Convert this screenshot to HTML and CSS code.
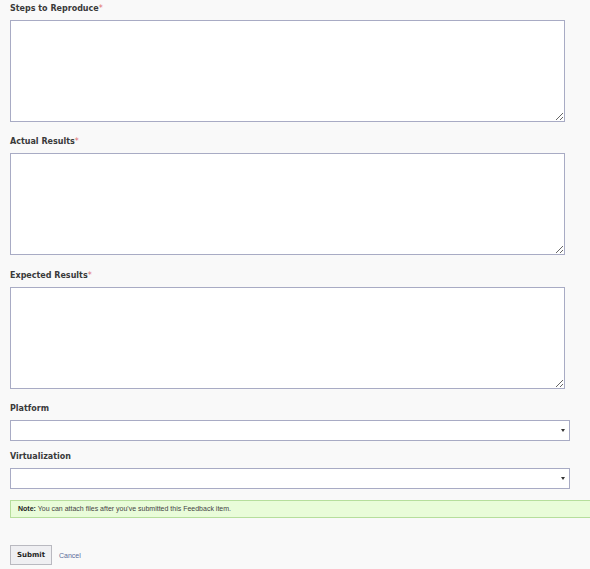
FILE: index.html
```html
<!DOCTYPE html>
<html lang="en">

<head>
    <link rel="stylesheet" href="styles.css">
</head>

<body>
    <form class="feedback-form">
        <div class="field">
            <label class="field-label">Steps to Reproduce<span class="req">*</span></label>
            <textarea class="area"></textarea>
        </div>
        <div class="field">
            <label class="field-label">Actual Results<span class="req">*</span></label>
            <textarea class="area"></textarea>
        </div>
        <div class="field field-shift">
            <label class="field-label">Expected Results<span class="req">*</span></label>
            <textarea class="area"></textarea>
        </div>
        <div class="field">
            <label class="field-label">Platform</label>
            <div class="select-wrap">
                <select class="dropdown"><option></option></select>
            </div>
        </div>
        <div class="field field-tight">
            <label class="field-label">Virtualization</label>
            <div class="select-wrap">
                <select class="dropdown"><option></option></select>
            </div>
        </div>

        <div class="note"><strong>Note:</strong> You can attach files after you've submitted this Feedback item.</div>

        <div class="actions">
            <button type="button" class="btn-submit">Submit</button>
            <a href="#" class="cancel">Cancel</a>
        </div>
    </form>
</body>

</html>
```

FILE: styles.css
```css
html,
body {
    margin: 0;
    background: #f9f9f9;
    overflow: hidden;
}

.feedback-form {
    font-family: "DejaVu Sans", Verdana, sans-serif;
    padding-left: 10px;
    width: 600px;
}

.field {
    margin-bottom: 11px;
}

.field-shift {
    padding-top: 1px;
}

.field-tight {
    margin-top: -4px;
}

.field-label {
    display: block;
    height: 12px;
    padding-top: 2px;
    line-height: 14px;
    margin-bottom: 6px;
    font-size: 8px;
    font-weight: bold;
    color: #3a3a3a;
}

.req {
    color: #e07070;
    font-weight: normal;
}

.area {
    display: block;
    box-sizing: border-box;
    width: 555px;
    height: 102px;
    margin: 0;
    background: #fff;
    border: 1px solid #a8abc4;
    border-radius: 0;
    outline: none;
}

.select-wrap {
    position: relative;
    width: 560px;
}

.dropdown {
    display: block;
    -webkit-appearance: none;
    appearance: none;
    box-sizing: border-box;
    width: 560px;
    height: 21px;
    margin: 0;
    background: #fff;
    border: 1px solid #a8abc4;
    border-radius: 0;
    outline: none;
}

.select-wrap::after {
    content: "";
    position: absolute;
    right: 5px;
    top: 9px;
    border-left: 2px solid transparent;
    border-right: 2px solid transparent;
    border-top: 3px solid #333;
}

.note {
    box-sizing: border-box;
    width: 600px;
    height: 18px;
    line-height: 16px;
    padding-left: 7px;
    background: #e9fcd9;
    border: 1px solid #b6de9c;
    font-family: "Liberation Sans", Arial, sans-serif;
    font-size: 7px;
    color: #444;
}

.note strong {
    color: #222;
}

.actions {
    display: flex;
    align-items: center;
    gap: 7px;
    margin-top: 27px;
}

.btn-submit {
    box-sizing: border-box;
    width: 42px;
    height: 20px;
    padding: 0;
    background: #efeff2;
    border: 1px solid #b9b9c0;
    font-family: "DejaVu Sans", Verdana, sans-serif;
    font-size: 7px;
    font-weight: bold;
    color: #222;
}

.cancel {
    font-family: "Liberation Sans", Arial, sans-serif;
    font-size: 7px;
    color: #5b6c9c;
    text-decoration: none;
}
```
